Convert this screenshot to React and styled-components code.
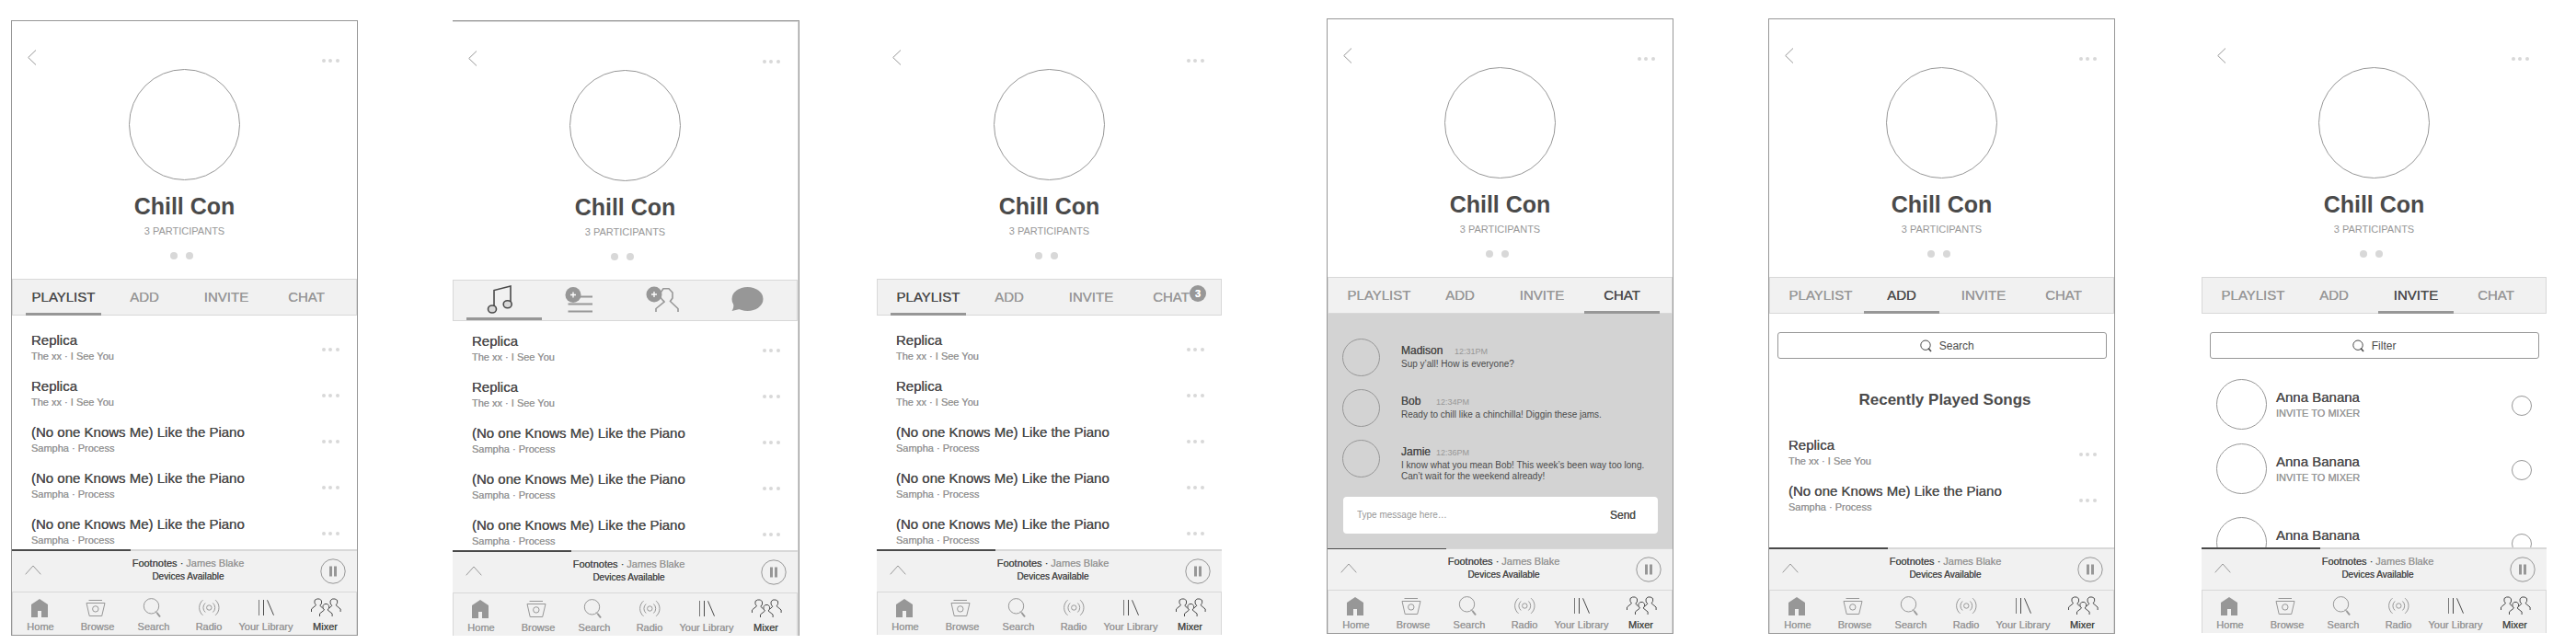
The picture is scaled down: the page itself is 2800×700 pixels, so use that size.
import React from "react";
import styled, { createGlobalStyle, css } from "styled-components";

const ink = "#4a4a4a";
const mid = "#979797";
const light = "#d8d8d8";
const panel = "#f1f1f1";

const GlobalStyle = createGlobalStyle`
  *, *::before, *::after { box-sizing: border-box; }
  body {
    margin: 0;
    background: #fff;
    color: ${ink};
    font-family: "Liberation Sans", Arial, Helvetica, sans-serif;
  }
  h1, h2, h3, p, ul { margin: 0; padding: 0; }
  ul { list-style: none; }
  button, input { font-family: inherit; color: inherit; }
  button { background: none; border: 0; padding: 0; cursor: pointer; }
  svg { display: block; }
`;

/* Doubles the edge coverage so the regular face reads as a medium weight */
const medium = css`
  font-weight: 400;
  text-shadow: 0 0 0 currentColor;
`;

const Board = styled.main`
  display: grid;
  grid-template-columns: 1fr 103px 1fr 83px 1fr 113px 1fr 103px 1fr 93px 1fr;
  padding: 20px 31px 0 12px;
`;

const Frame = styled.section`
  grid-column: ${(p) => p.$column};
  min-width: 0;
  height: calc(100vh - 31px);
  margin-top: ${(p) => (p.$lowered ? "2px" : "0")};
  border: 1px solid ${(p) => (p.$frame === "none" ? "transparent" : mid)};
  ${(p) =>
    p.$frame === "open" &&
    css`
      border-left: 0;
      border-bottom: 0;
      padding: 1px 1px 0 0;
      background: ${light};
    `}
`;

const Screen = styled.div`
  display: flex;
  flex-direction: column;
  height: 100%;
  background: #fff;
`;

const Header = styled.header`
  display: flex;
  flex-direction: column;
  align-items: center;
  flex: none;
  padding-bottom: 21px;
`;

const TopBar = styled.div`
  display: flex;
  justify-content: space-between;
  align-items: flex-end;
  align-self: stretch;
  padding: 31px 19px 0 17px;
`;

const MoreButton = styled.button`
  flex: none;
  padding: 3px 0;
`;

const Cover = styled.div`
  width: 121px;
  height: 121px;
  margin-top: 4px;
  border: 1px solid ${mid};
  border-radius: 50%;
`;

const Title = styled.h1`
  margin-top: 13px;
  font-size: 25px;
  line-height: 30px;
  font-weight: 700;
`;

const Participants = styled.p`
  margin-top: 5px;
  font-size: 11px;
  line-height: 14px;
  color: ${mid};
`;

const Pager = styled.div`
  display: flex;
  gap: 9px;
  margin-top: 16px;
  padding-right: 6px;
`;

const PagerDot = styled.span`
  width: 8px;
  height: 8px;
  border-radius: 50%;
  background: ${light};
`;

const Tabs = styled.nav`
  display: grid;
  grid-template-columns: 88fr 89fr 87fr 82fr;
  flex: none;
  height: ${(p) => (p.$tall ? "45px" : "40px")};
  padding: 0 13px 0 14px;
  background: ${panel};
  border: 1px solid ${light};
`;

const Tab = styled.button`
  position: relative;
  width: 82px;
  font-size: 15px;
  line-height: 20px;
  color: ${(p) => (p.$active ? ink : mid)};
  ${medium}
  ${(p) =>
    p.$active &&
    css`
      &::after {
        content: "";
        position: absolute;
        left: 0;
        right: 0;
        bottom: ${p.$icon ? "0" : "-1px"};
        height: 3px;
        background: ${mid};
      }
    `}
`;

const Badge = styled.span`
  position: absolute;
  left: 61px;
  top: 6px;
  width: 18px;
  height: 18px;
  border-radius: 50%;
  background: ${mid};
  color: #fff;
  font-size: 11px;
  font-weight: 700;
  line-height: 18px;
  text-align: center;
`;

const Body = styled.div`
  flex: 1;
  min-height: 0;
  overflow: hidden;
  background: ${(p) => (p.$shaded ? "#d3d3d3" : "#fff")};
`;

const SongList = styled.ul`
  padding-top: ${(p) => p.$top}px;
`;

const Song = styled.li`
  display: flex;
  align-items: center;
  justify-content: space-between;
  height: 50px;
  padding: 0 19px 0 21px;
`;

const SongText = styled.div`
  padding-bottom: 6px;
`;

const ItemTitle = styled.h3`
  font-size: 15px;
  line-height: 20px;
  white-space: nowrap;
  ${medium}
`;

const ItemMeta = styled.p`
  font-size: 11px;
  line-height: 14px;
  color: ${mid};
  ${medium}
`;

const SearchBox = styled.label`
  display: flex;
  align-items: center;
  gap: 8px;
  height: 29px;
  margin: 20px 8px 0 9px;
  padding-left: 41%;
  border: 1px solid ${mid};
  border-radius: 3px;
`;

const SearchInput = styled.input`
  flex: 1;
  min-width: 0;
  padding: 0;
  border: 0;
  outline: 0;
  background: none;
  font-size: 12px;
  line-height: 16px;
  &::placeholder { color: ${ink}; opacity: 1; }
`;

const SectionTitle = styled.h2`
  margin-top: 35px;
  padding-left: 7px;
  font-size: 17px;
  line-height: 20px;
  font-weight: 700;
  text-align: center;
`;

const PeopleList = styled.ul`
  padding-top: 14px;
`;

const Person = styled.li`
  margin-top: ${(p) => (p.$spaced ? "10px" : "0")};
`;

const PersonLabel = styled.label`
  display: flex;
  align-items: center;
  gap: 10px;
  height: 70px;
  padding: 0 16px;
`;

const PersonText = styled.div`
  flex: 1;
  min-height: 34px;
`;

const Avatar = styled.div`
  flex: none;
  width: ${(p) => p.$size}px;
  height: ${(p) => p.$size}px;
  border: 1px solid ${mid};
  border-radius: 50%;
`;

const RoundCheck = styled.input`
  appearance: none;
  flex: none;
  width: 22px;
  height: 22px;
  margin: 4px 0 0;
  border: 1px solid ${mid};
  border-radius: 50%;
  &:checked { background: ${mid}; }
`;

const Messages = styled.ul`
  display: flex;
  flex-direction: column;
  gap: 14px;
  padding: 27px 16px 0;
`;

const Message = styled.li`
  display: flex;
  gap: 23px;
  height: 41px;
`;

const MessageContent = styled.div`
  flex: 1;
  min-width: 0;
  padding-top: 5px;
`;

const MessageHead = styled.div`
  display: flex;
  align-items: baseline;
  font-size: 12px;
  line-height: 16px;
`;

const Sender = styled.h3`
  width: ${(p) => p.$width}px;
  font-size: 12px;
  ${medium}
`;

const Time = styled.time`
  font-size: 9px;
  color: ${mid};
`;

const MessageText = styled.p`
  font-size: 10px;
  line-height: 12px;
`;

const Composer = styled.form`
  display: flex;
  align-items: center;
  height: 40px;
  margin: 21px 16px 0 17px;
  padding: 0 24px 0 15px;
  border-radius: 4px;
  background: #fff;
`;

const ComposerInput = styled.input`
  flex: 1;
  min-width: 0;
  padding: 0;
  border: 0;
  outline: 0;
  background: none;
  font-size: 10px;
  line-height: 12px;
  &::placeholder { color: ${mid}; opacity: 1; }
`;

const SendButton = styled.button`
  font-size: 12px;
  line-height: 16px;
  ${medium}
`;

const Progress = styled.div`
  flex: none;
  height: ${(p) => (p.$thin ? "1px" : "2px")};
  background: ${light};
`;

const ProgressFill = styled.div`
  height: 100%;
  background: ${ink};
`;

const Player = styled.div`
  display: flex;
  align-items: center;
  flex: none;
  height: 44px;
  padding: 0 12px 0 14px;
  background: ${panel};
`;

const ExpandButton = styled.button`
  width: 34px;
  padding: 0 0 3px;
`;

const NowPlaying = styled.div`
  flex: 1;
  padding-bottom: 2px;
  text-align: center;
`;

const Track = styled.p`
  font-size: 11px;
  line-height: 14px;
  ${medium}
`;

const Artist = styled.span`
  color: ${mid};
`;

const Devices = styled.p`
  font-size: 10px;
  line-height: 16px;
  ${medium}
`;

const BottomNav = styled.nav`
  display: grid;
  grid-template-columns: 60fr 64fr 58fr 62fr 62fr 67fr;
  flex: none;
  height: 47px;
  padding-top: 5px;
  background: ${panel};
  border: 1px solid ${light};
  border-bottom: 0;
`;

const NavItem = styled.a`
  display: flex;
  flex-direction: column;
  align-items: center;
  gap: 1px;
  min-width: 0;
  color: ${(p) => (p.$active ? ink : mid)};
  font-size: 11px;
  line-height: 14px;
  white-space: nowrap;
  text-decoration: none;
  ${medium}
`;

/* ---------- icons ---------- */

const BackIcon = () => (
  <svg width="10" height="17" viewBox="0 0 10 17" fill="none" stroke={mid}>
    <path d="M9 .5.7 8.5 9 16.5" />
  </svg>
);

const MoreIcon = () => (
  <svg width="19" height="4" viewBox="0 0 19 4" fill={light}>
    <circle cx="2" cy="2" r="2" />
    <circle cx="9" cy="2" r="2" />
    <circle cx="17" cy="2" r="2" />
  </svg>
);

const NoteTabIcon = () => (
  <svg width="82" height="43" viewBox="0 0 82 43" fill="none" stroke={ink} strokeWidth="1.6">
    <path d="M30 28.5V10.5L48 6V24" />
    <ellipse cx="28" cy="31" rx="4.5" ry="4" fill={light} />
    <ellipse cx="44.7" cy="25.7" rx="4.5" ry="4" fill={light} />
  </svg>
);

const Plus = ({ x, y }) => (
  <>
    <circle cx={x} cy={y} r="8.5" fill={mid} stroke="none" />
    <path d={`M${x - 3} ${y}h6M${x} ${y - 3}v6`} stroke="#fff" strokeWidth="1.3" />
  </>
);

const QueueTabIcon = () => (
  <svg width="82" height="43" viewBox="0 0 82 43" fill="none" stroke={mid} strokeWidth="2">
    <path d="M31 17.5H49M22.5 25.5H49M22.5 33.5H49" />
    <Plus x={28} y={15.5} />
  </svg>
);

const PersonTabIcon = () => (
  <svg width="82" height="43" viewBox="0 0 82 43" fill="none" stroke={mid} strokeWidth="1.6">
    <path d="M29 34V30.5L38 23C37 21.5 35.5 21 34 18V13L37 8.8H43L47 13V19L44.5 22.5 53 30.5V34" />
    <Plus x={27} y={15} />
  </svg>
);

const BubbleTabIcon = () => (
  <svg width="82" height="43" viewBox="0 0 82 43" fill={mid}>
    <ellipse cx="41.5" cy="20" rx="17" ry="13" />
    <path d="M26 24C27 28 26 31 24.5 33L33 31Z" />
  </svg>
);

const GlassIcon = () => (
  <svg width="13" height="14" viewBox="0 0 13 14" fill="none" stroke={ink}>
    <circle cx="6" cy="6.2" r="5.2" />
    <path d="M9 9.5 12 13" strokeWidth="1.6" />
  </svg>
);

const ChevronUpIcon = () => (
  <svg width="18" height="11" viewBox="0 0 18 11" fill="none" stroke={mid}>
    <path d="M.7 10.3 9 1 17.3 10.3" />
  </svg>
);

const PauseIcon = () => (
  <svg width="28" height="28" viewBox="0 0 28 28" fill="none" stroke={mid}>
    <circle cx="14" cy="14" r="13.2" />
    <path d="M10 8.5h3v11h-3zM15 8.5h3v11h-3z" fill={mid} stroke="none" />
  </svg>
);

const NavSvg = ({ children, color = mid }) => (
  <svg width="40" height="24" viewBox="0 0 40 24" fill="none" stroke={color}>
    {children}
  </svg>
);

const HomeIcon = () => (
  <NavSvg>
    <path d="M10 8 19 2 28 8V22H21V15H17V22H10Z" fill={mid} stroke="none" />
  </NavSvg>
);

const BrowseIcon = () => (
  <NavSvg>
    <path d="M10.5 3.5H25M8 6.5H28L24.7 20.5H11.2Z" />
    <circle cx="17.8" cy="12.9" r="3.2" />
  </NavSvg>
);

const SearchIcon = () => (
  <NavSvg>
    <circle cx="17.5" cy="9.8" r="8.2" />
    <path d="M22 15.5 23.5 17" />
    <path d="M23.5 17 27 21.5" strokeWidth="2" />
  </NavSvg>
);

const RadioIcon = () => (
  <NavSvg>
    <circle cx="20.3" cy="11.5" r="2.7" />
    <path d="M16.2 6.5A6.6 6.6 0 0 0 16.2 16.5M24.4 6.5A6.6 6.6 0 0 1 24.4 16.5" />
    <path d="M13.5 3.2A10.8 10.8 0 0 0 13.5 19.8M27.1 3.2A10.8 10.8 0 0 1 27.1 19.8" />
  </NavSvg>
);

const LibraryIcon = () => (
  <NavSvg color={ink}>
    <path d="M12.5 3V20" stroke="#777" />
    <path d="M17.5 3V20M21.5 3.3 28.5 19.7" />
  </NavSvg>
);

const MixerIcon = () => (
  <NavSvg color={ink}>
    <path d="M4.5 16V13L9.5 8.8 8 6.5V3.5L10.5 2H13.5L15.5 4V7L13.8 9.3 16.5 11.8" />
    <path d="M36.1 16V13L31.1 8.8 32.6 6.5V3.5L30.1 2H27.1L25.1 4V7L26.8 9.3 24.1 11.8" />
    <path d="M13.5 21V18L18.5 14 17 12V9.5L18.8 7.5H21.8L23.6 9.5V12L22.1 14 27.1 18V21" />
  </NavSvg>
);

/* ---------- data ---------- */

const tabs = [
  { id: "playlist", label: "PLAYLIST", Icon: NoteTabIcon },
  { id: "add", label: "ADD", Icon: QueueTabIcon },
  { id: "invite", label: "INVITE", Icon: PersonTabIcon },
  { id: "chat", label: "CHAT", Icon: BubbleTabIcon },
];

const replica = { title: "Replica", meta: "The xx · I See You" };
const piano = { title: "(No one Knows Me) Like the Piano", meta: "Sampha · Process" };
const playlist = [replica, replica, piano, piano, piano];

const people = [
  { name: "Anna Banana", action: "INVITE TO MIXER" },
  { name: "Anna Banana", action: "INVITE TO MIXER" },
  { name: "Anna Banana", spaced: true },
];

const messages = [
  { name: "Madison", time: "12:31PM", width: 58, text: "Sup y’all! How is everyone?" },
  { name: "Bob", time: "12:34PM", width: 38, text: "Ready to chill like a chinchilla! Diggin these jams." },
  {
    name: "Jamie",
    time: "12:36PM",
    width: 38,
    text: "I know what you mean Bob! This week’s been way too long. Can’t wait for the weekend already!",
  },
];

const navItems = [
  { label: "Home", Icon: HomeIcon },
  { label: "Browse", Icon: BrowseIcon },
  { label: "Search", Icon: SearchIcon },
  { label: "Radio", Icon: RadioIcon },
  { label: "Your Library", Icon: LibraryIcon },
  { label: "Mixer", Icon: MixerIcon, active: true },
];

/* ---------- parts ---------- */

const More = () => (
  <MoreButton type="button" aria-label="More options">
    <MoreIcon />
  </MoreButton>
);

const Songs = ({ songs, top }) => (
  <SongList $top={top}>
    {songs.map((song, i) => (
      <Song key={i}>
        <SongText>
          <ItemTitle>{song.title}</ItemTitle>
          <ItemMeta>{song.meta}</ItemMeta>
        </SongText>
        <More />
      </Song>
    ))}
  </SongList>
);

const SearchField = ({ placeholder }) => (
  <SearchBox>
    <GlassIcon />
    <SearchInput type="text" placeholder={placeholder} aria-label={placeholder} />
  </SearchBox>
);

const AddPanel = () => (
  <>
    <SearchField placeholder="Search" />
    <SectionTitle>Recently Played Songs</SectionTitle>
    <Songs songs={[replica, piano]} top={24} />
  </>
);

const InvitePanel = () => (
  <>
    <SearchField placeholder="Filter" />
    <PeopleList>
      {people.map((person, i) => (
        <Person key={i} $spaced={person.spaced}>
          <PersonLabel>
            <Avatar $size={55} />
            <PersonText>
              <ItemTitle>{person.name}</ItemTitle>
              {person.action && <ItemMeta>{person.action}</ItemMeta>}
            </PersonText>
            <RoundCheck type="checkbox" />
          </PersonLabel>
        </Person>
      ))}
    </PeopleList>
  </>
);

const ChatPanel = () => (
  <>
    <Messages>
      {messages.map((m) => (
        <Message key={m.name}>
          <Avatar $size={41} />
          <MessageContent>
            <MessageHead>
              <Sender $width={m.width}>{m.name}</Sender>
              <Time>{m.time}</Time>
            </MessageHead>
            <MessageText>{m.text}</MessageText>
          </MessageContent>
        </Message>
      ))}
    </Messages>
    <Composer onSubmit={(e) => e.preventDefault()}>
      <ComposerInput type="text" placeholder="Type message here…" aria-label="Message" />
      <SendButton type="submit">Send</SendButton>
    </Composer>
  </>
);

const MixerScreen = ({ column, frame, lowered, active, iconTabs, unread, children }) => (
  <Frame $column={column} $frame={frame} $lowered={lowered}>
    <Screen>
      <Header>
        <TopBar>
          <button type="button" aria-label="Back">
            <BackIcon />
          </button>
          <More />
        </TopBar>
        <Cover />
        <Title>Chill Con</Title>
        <Participants>3 PARTICIPANTS</Participants>
        <Pager>
          <PagerDot />
          <PagerDot />
        </Pager>
      </Header>
      <Tabs $tall={iconTabs}>
        {tabs.map(({ id, label, Icon }) => (
          <Tab
            key={id}
            type="button"
            $active={id === active}
            $icon={iconTabs}
            aria-label={iconTabs ? label : undefined}
          >
            {iconTabs ? <Icon /> : label}
            {id === "chat" && unread ? <Badge>{unread}</Badge> : null}
          </Tab>
        ))}
      </Tabs>
      <Body $shaded={active === "chat"}>{children}</Body>
      <Progress $thin={active === "chat"}>
        <ProgressFill style={{ width: `${(129 / 375) * 100}%` }} />
      </Progress>
      <Player>
        <ExpandButton type="button" aria-label="Expand player">
          <ChevronUpIcon />
        </ExpandButton>
        <NowPlaying>
          <Track>
            Footnotes · <Artist>James Blake</Artist>
          </Track>
          <Devices>Devices Available</Devices>
        </NowPlaying>
        <button type="button" aria-label="Pause">
          <PauseIcon />
        </button>
      </Player>
      <BottomNav>
        {navItems.map(({ label, Icon, active: on }) => (
          <NavItem key={label} href="#" $active={on}>
            <Icon />
            {label}
          </NavItem>
        ))}
      </BottomNav>
    </Screen>
  </Frame>
);

export default function App() {
  return (
    <>
      <GlobalStyle />
      <Board>
        <MixerScreen column={1} frame="full" lowered active="playlist">
          <Songs songs={playlist} top={12} />
        </MixerScreen>
        <MixerScreen column={3} frame="open" lowered active="playlist" iconTabs>
          <Songs songs={playlist} top={7} />
        </MixerScreen>
        <MixerScreen column={5} frame="none" lowered active="playlist" unread={3}>
          <Songs songs={playlist} top={12} />
        </MixerScreen>
        <MixerScreen column={7} frame="full" active="chat">
          <ChatPanel />
        </MixerScreen>
        <MixerScreen column={9} frame="full" active="add">
          <AddPanel />
        </MixerScreen>
        <MixerScreen column={11} frame="none" active="invite">
          <InvitePanel />
        </MixerScreen>
      </Board>
    </>
  );
}
